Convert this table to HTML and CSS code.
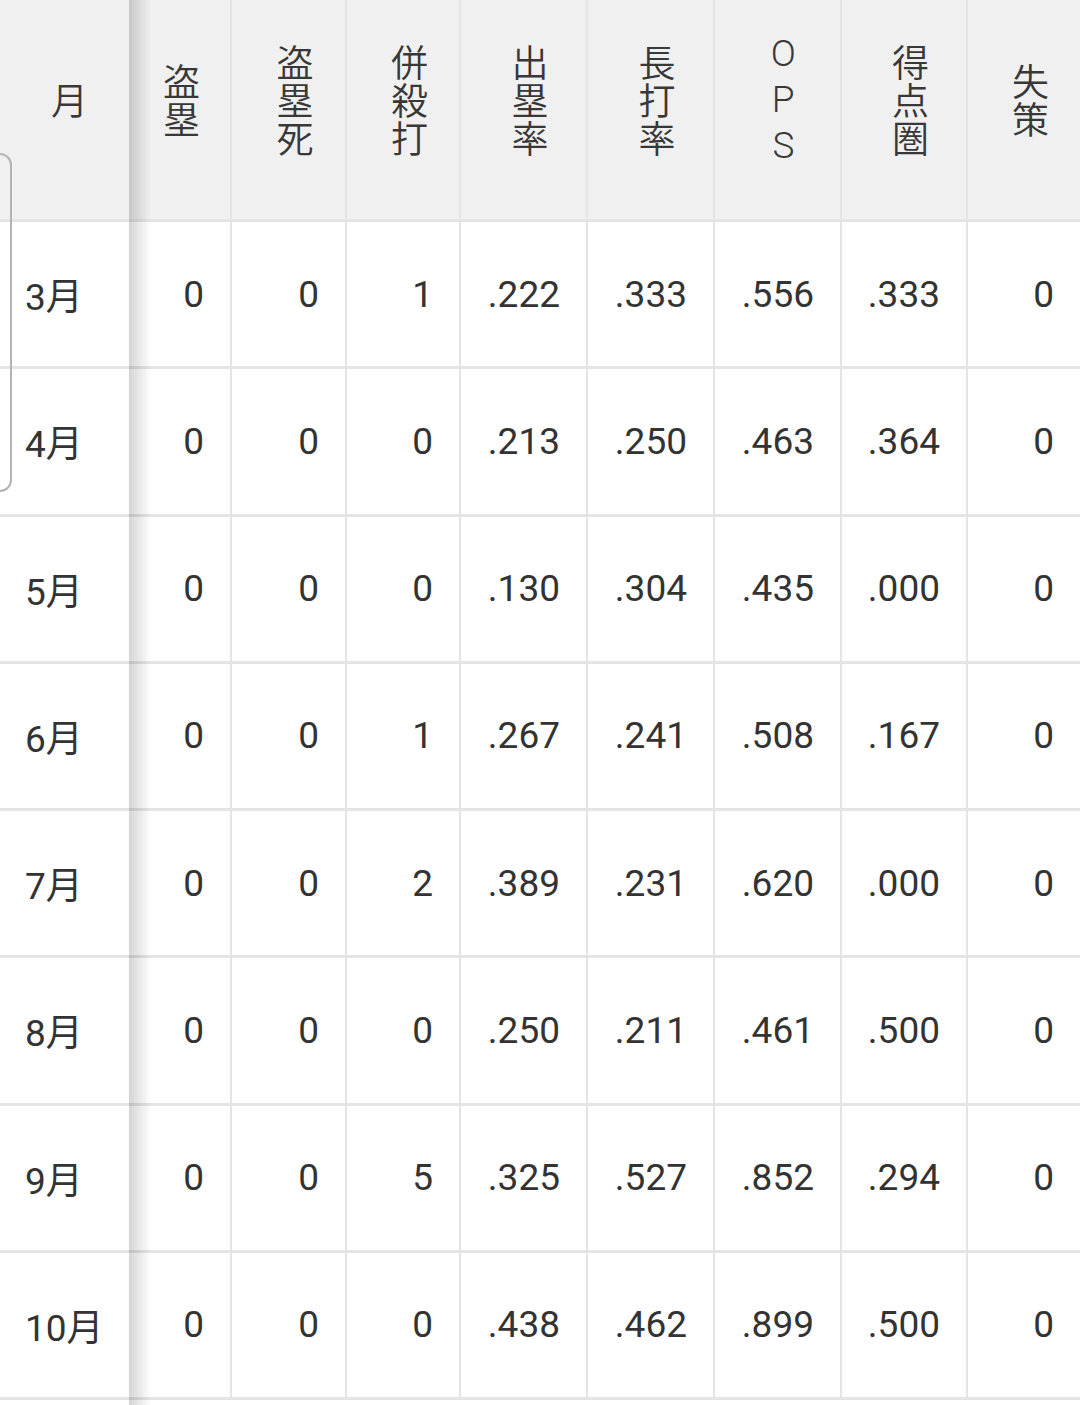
FILE: index.html
```html
<!DOCTYPE html>
<html lang="ja">
  <head>
    <meta charset="UTF-8" />
    <meta name="viewport" content="width=device-width, initial-scale=1.0" />
    <title>月別成績</title>
    <link rel="stylesheet" href="styles.css">
  </head>
  <body>
    <div class="stats_wrap">
      <table class="stats">
        <colgroup>
          <col class="c_month" />
          <col class="c_sb" />
          <col class="c_cs" />
          <col class="c_dp" />
          <col class="c_rate" />
          <col class="c_rate" />
          <col class="c_rate" />
          <col class="c_risp" />
          <col class="c_err" />
        </colgroup>
        <thead>
          <tr>
            <th class="month_head"><span class="vt">月</span></th>
            <th><span class="vt">盗塁</span></th>
            <th><span class="vt">盗塁死</span></th>
            <th><span class="vt">併殺打</span></th>
            <th><span class="vt">出塁率</span></th>
            <th><span class="vt">長打率</span></th>
            <th><span class="vt vt_latin">OPS</span></th>
            <th><span class="vt">得点圏</span></th>
            <th><span class="vt">失策</span></th>
          </tr>
        </thead>
        <tbody>
          <tr><td>3月</td><td>0</td><td>0</td><td>1</td><td>.222</td><td>.333</td><td>.556</td><td>.333</td><td>0</td></tr>
          <tr><td>4月</td><td>0</td><td>0</td><td>0</td><td>.213</td><td>.250</td><td>.463</td><td>.364</td><td>0</td></tr>
          <tr><td>5月</td><td>0</td><td>0</td><td>0</td><td>.130</td><td>.304</td><td>.435</td><td>.000</td><td>0</td></tr>
          <tr><td>6月</td><td>0</td><td>0</td><td>1</td><td>.267</td><td>.241</td><td>.508</td><td>.167</td><td>0</td></tr>
          <tr><td>7月</td><td>0</td><td>0</td><td>2</td><td>.389</td><td>.231</td><td>.620</td><td>.000</td><td>0</td></tr>
          <tr><td>8月</td><td>0</td><td>0</td><td>0</td><td>.250</td><td>.211</td><td>.461</td><td>.500</td><td>0</td></tr>
          <tr><td>9月</td><td>0</td><td>0</td><td>5</td><td>.325</td><td>.527</td><td>.852</td><td>.294</td><td>0</td></tr>
          <tr><td>10月</td><td>0</td><td>0</td><td>0</td><td>.438</td><td>.462</td><td>.899</td><td>.500</td><td>0</td></tr>
        </tbody>
      </table>
      <div class="sticky_shadow"></div>
      <div class="drawer_handle"></div>
    </div>
  </body>
</html>
```

FILE: styles.css
```css
* {
  box-sizing: border-box;
  padding: 0;
  margin: 0;
}
html,
body {
  overflow: hidden;
}
body {
  background-color: #fff;
  font-family: Roboto, "Noto Sans CJK JP", sans-serif;
  color: #333;
}
.stats_wrap {
  position: relative;
  width: 1080px;
  height: 1405px;
  overflow: hidden;
}
.stats {
  table-layout: fixed;
  border-collapse: separate;
  border-spacing: 0;
  width: 1080px;
  font-size: 37px;
}
.c_month { width: 130px; }
.c_sb { width: 100px; }
.c_cs { width: 115px; }
.c_dp { width: 114px; }
.c_rate { width: 127px; }
.c_risp { width: 126px; }
.c_err { width: 114px; }

.stats th,
.stats td {
  border-bottom: 3px solid #e4e4e4;
  font-weight: normal;
  vertical-align: middle;
}
.stats th:nth-child(n + 3),
.stats td:nth-child(n + 3) {
  border-left: 2px solid #e4e4e4;
}
.stats thead tr {
  height: 222px;
}
.stats th {
  background-color: #f0f0f0;
  text-align: center;
  padding: 0 0 8px 12px;
}
.stats th:nth-child(2) {
  padding-left: 2px;
}
.stats th.month_head {
  padding-left: 8px;
}
.vt {
  display: inline-block;
  writing-mode: vertical-rl;
  text-orientation: upright;
  font-family: "Noto Sans CJK JP", sans-serif;
  font-size: 37px;
  font-weight: 350;
  line-height: 1;
  letter-spacing: 1px;
  color: #383838;
}
.vt_latin {
  font-family: Roboto, sans-serif;
  letter-spacing: 3px;
}
.stats tbody tr {
  height: 147.25px;
}
.stats td {
  text-align: right;
  padding-right: 26px;
}
.stats td:first-child {
  text-align: left;
  padding: 0 0 0 25px;
}
.sticky_shadow {
  position: absolute;
  top: 0;
  bottom: 0;
  left: 129px;
  width: 22px;
  background: linear-gradient(to right, rgba(0, 0, 0, 0.17), rgba(0, 0, 0, 0));
  pointer-events: none;
}
.drawer_handle {
  position: absolute;
  top: 153px;
  left: -20px;
  width: 32px;
  height: 339px;
  border: 2px solid #b3b3b3;
  border-radius: 12px;
}
```
